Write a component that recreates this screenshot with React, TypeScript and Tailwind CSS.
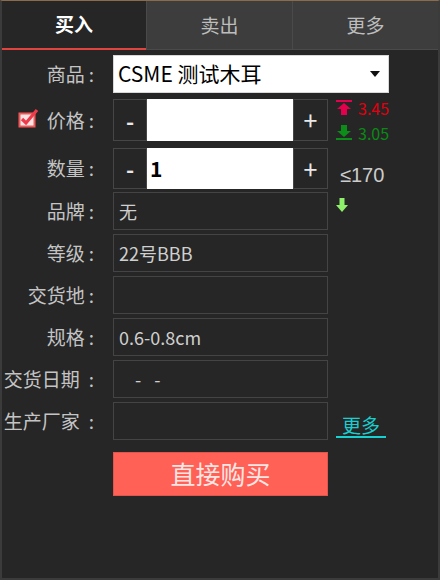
import React from "react";

const font = "font-['Microsoft_YaHei','Noto_Sans_CJK_SC',sans-serif]";

function Label({ children, wide }: { children: React.ReactNode; wide?: boolean }) {
  return (
    <div className="flex w-[111px] shrink-0 items-center justify-end pr-[19px] text-[19px] text-[#c4c4c4]">
      {children}
      <span className={wide ? "ml-[9px]" : "ml-[4px]"}>:</span>
    </div>
  );
}

function InfoRow({ label, value, right }: { label: string; value?: React.ReactNode; right?: React.ReactNode }) {
  return (
    <div className="mt-[4px] flex h-[38px]">
      <Label wide={label.length > 3}>{label}</Label>
      <div className="flex w-[215px] items-center border border-[#444444] pl-[5px] text-[18px] text-[#cfcfcf]">
        {value}
      </div>
      <div className="flex flex-1 items-center pl-[8px]">{right}</div>
    </div>
  );
}

function Stepper({ value }: { value: string }) {
  return (
    <div className="flex w-[215px]">
      <button className="flex w-[34px] items-center justify-center border border-[#464646] text-[22px] font-bold text-[#e8e8e8]">
        -
      </button>
      <div className="flex flex-1 items-center bg-white pl-[3px] text-[21px] font-bold text-black">{value}</div>
      <button className="flex w-[35px] items-center justify-center border border-[#464646] text-[25px] text-[#e8e8e8]">
        +
      </button>
    </div>
  );
}

export default function App() {
  return (
    <div className={`${font} flex h-[580px] w-[440px] flex-col border-x-2 border-b-2 border-t border-[#3b3b3b] border-t-[#8b6b4b] bg-[#262626]`}>
      <div className="flex h-[49px]">
        <div className="flex w-[144px] items-center justify-center border-b-2 border-[#e0443c] text-[19px] font-bold text-white">
          买入
        </div>
        <div className="flex flex-1 items-center justify-center border-b border-l border-[#4a4a4a] bg-[#3d3d3d] text-[19px] text-[#bdbdbd]">
          卖出
        </div>
        <div className="flex flex-1 items-center justify-center border-b border-l border-[#4a4a4a] bg-[#3d3d3d] text-[19px] text-[#bdbdbd]">
          更多
        </div>
      </div>

      <div className="mt-[5px] flex h-[38px]">
        <Label>商品</Label>
        <div className="flex w-[276px] items-center justify-between border border-[#d8d8d8] bg-white pl-[4px] pr-[8px] text-[21px] text-black">
          <span>CSME 测试木耳</span>
          <svg width="10" height="6" viewBox="0 0 10 6">
            <polygon points="0,0 10,0 5,6" fill="#111" />
          </svg>
        </div>
      </div>

      <div className="mt-[6px] flex h-[42px]">
        <div className="relative flex w-[111px] shrink-0 items-center justify-end pr-[19px] text-[19px] text-[#c4c4c4]">
          <svg className="absolute left-[15px] top-[8px]" width="22" height="22" viewBox="0 0 22 22">
            <rect x="2.5" y="6.5" width="15" height="13" fill="#ffe4e4" stroke="#f05858" strokeWidth="2" />
            <path d="M5 12 L9 16 L20 3" fill="none" stroke="#ee3b4b" strokeWidth="3.2" />
          </svg>
          价格<span className="ml-[4px]">:</span>
        </div>
        <Stepper value="" />
        <div className="flex flex-col justify-center gap-[7px] pl-[8px] text-[16px] leading-[18px]">
          <div className="flex items-center gap-[6px] text-[#e00010]">
            <svg width="16" height="15" viewBox="0 0 16 15">
              <rect x="0" y="0" width="16" height="2" fill="#e5004e" />
              <polygon points="8,3 1,9 15,9" fill="#e5004e" />
              <rect x="5" y="9" width="6" height="6" fill="#e5004e" />
            </svg>
            3.45
          </div>
          <div className="flex items-center gap-[6px] text-[#0a8a14]">
            <svg width="16" height="15" viewBox="0 0 16 15">
              <rect x="5" y="0" width="6" height="6" fill="#0c8c18" />
              <polygon points="8,12 1,6 15,6" fill="#0c8c18" />
              <rect x="0" y="13" width="16" height="2" fill="#0c8c18" />
            </svg>
            3.05
          </div>
        </div>
      </div>

      <div className="mt-[7px] flex h-[41px]">
        <Label>数量</Label>
        <Stepper value="1" />
        <div className="flex items-center pl-[12px] pt-[12px] font-['Liberation_Sans',sans-serif] text-[20px] text-[#cccccc]">
          ≤170
        </div>
      </div>

      <div className="mt-[-1px]">
        <InfoRow
          label="品牌"
          value="无"
          right={
            <svg className="mt-[-12px]" width="12" height="14" viewBox="0 0 12 14">
              <rect x="3.5" y="0" width="5" height="7" fill="#8ef06a" />
              <polygon points="6,14 0,7 12,7" fill="#8ef06a" />
            </svg>
          }
        />
      </div>
      <InfoRow label="等级" value="22号BBB" />
      <InfoRow label="交货地" />
      <InfoRow label="规格" value="0.6-0.8cm" />
      <InfoRow
        label="交货日期"
        value={
          <>
            <span className="ml-[16px]">-</span>
            <span className="ml-[13px]">-</span>
          </>
        }
      />
      <InfoRow
        label="生产厂家"
        right={
          <span className="mt-[10px] border-b-2 border-[#18d0d0] px-[6px] text-[19px] leading-[22px] text-[#18d0d0]">
            更多
          </span>
        }
      />

      <div className="mt-[12px] flex">
        <div className="w-[111px] shrink-0" />
        <button className="h-[44px] w-[215px] border border-[#e0554c] bg-[#ff6157] text-[25px] text-[#ffe6e4]">
          直接购买
        </button>
      </div>
    </div>
  );
}
